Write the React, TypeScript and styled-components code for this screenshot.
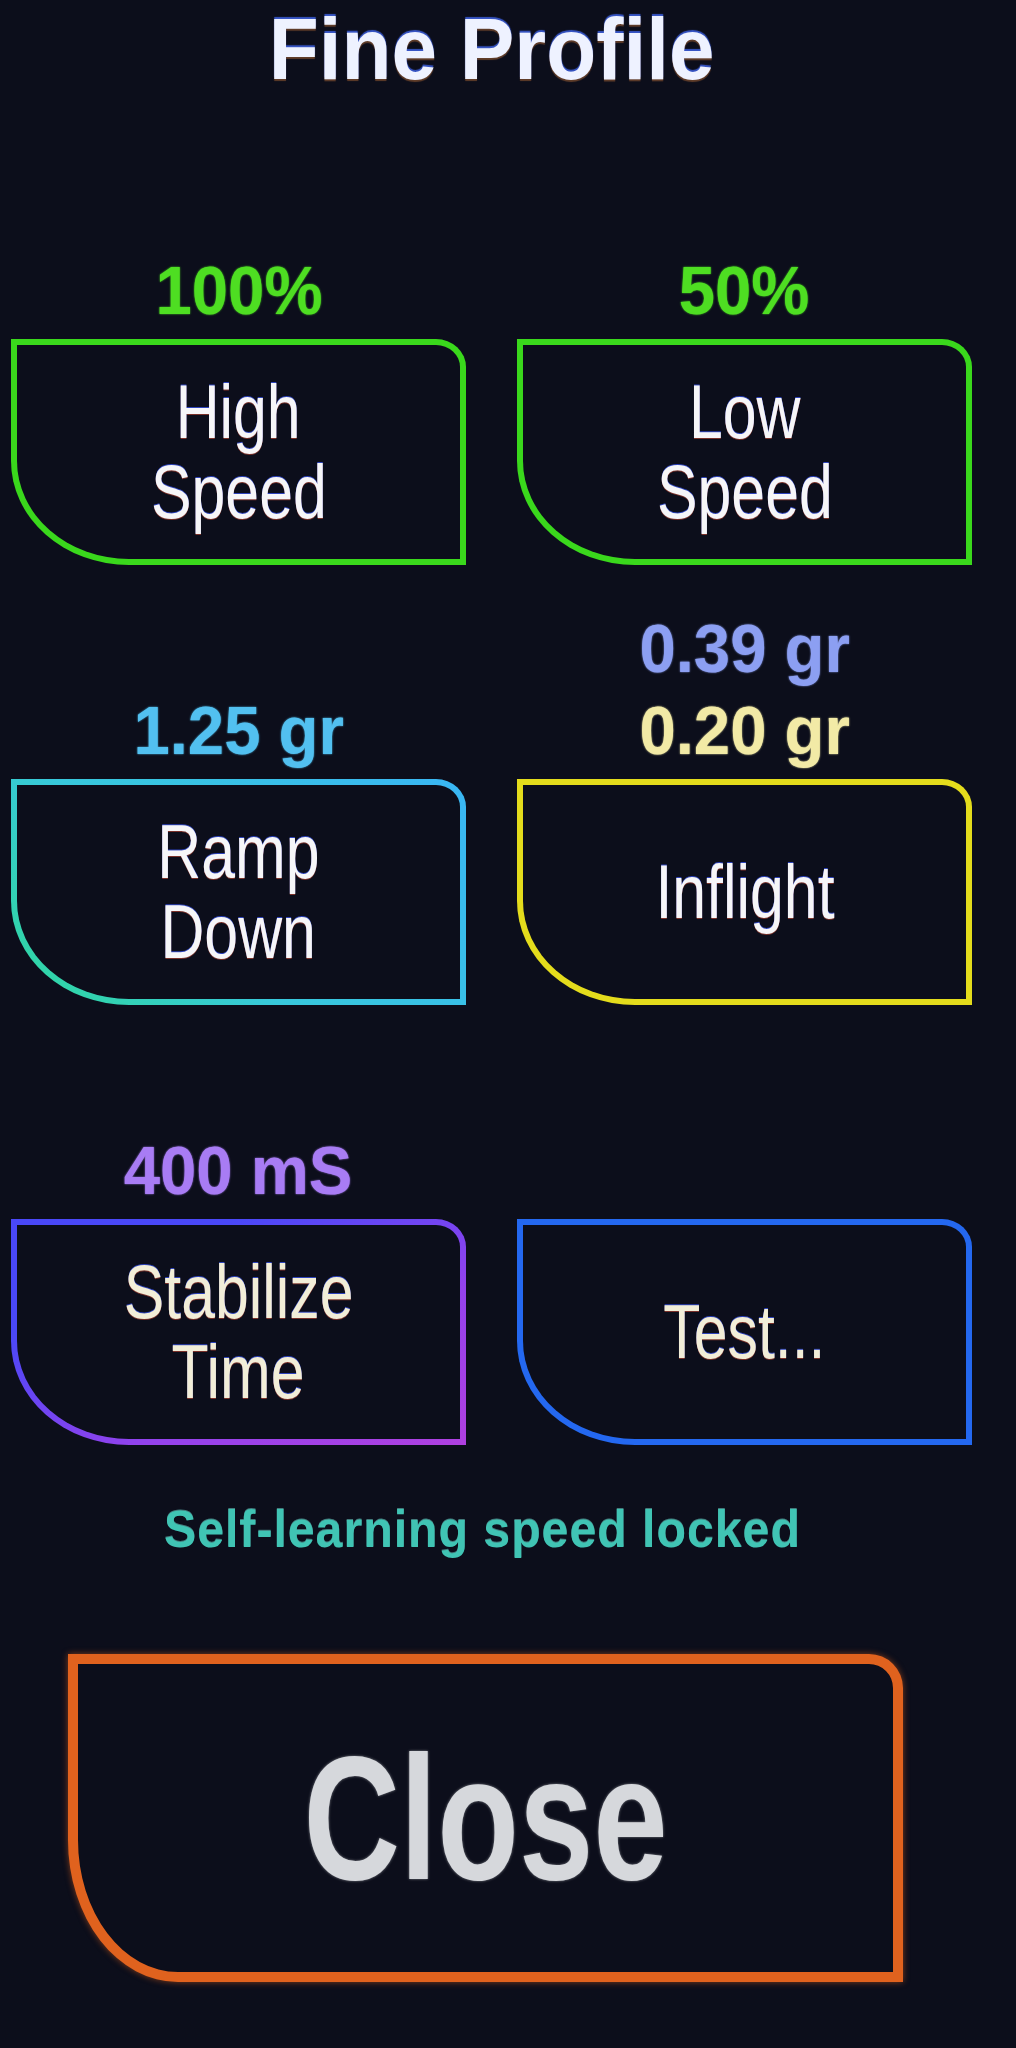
import React from "react";
import styled, { createGlobalStyle } from "styled-components";

const BG = "#0c0e1b";

interface Setting {
  id: string;
  values: { text: string; color: string }[];
  label: string[];
  border: string;
  labelColor?: string;
}

const settings: Setting[] = [
  {
    id: "high",
    values: [{ text: "100%", color: "#4ede22" }],
    label: ["High", "Speed"],
    border: "#3ad81c",
  },
  {
    id: "low",
    values: [{ text: "50%", color: "#4ede22" }],
    label: ["Low", "Speed"],
    border: "#3ad81c",
  },
  {
    id: "ramp",
    values: [{ text: "1.25 gr", color: "#52c0f0" }],
    label: ["Ramp", "Down"],
    border: "linear-gradient(45deg, #2fd89a 0%, #38c8dc 40%, #3ab6f4 100%)",
  },
  {
    id: "inflight",
    values: [
      { text: "0.39 gr", color: "#8c9ff2" },
      { text: "0.20 gr", color: "#f2eaa6" },
    ],
    label: ["Inflight"],
    border: "#e4dc1c",
  },
  {
    id: "stabilize",
    values: [{ text: "400 mS", color: "#a87cf4" }],
    label: ["Stabilize", "Time"],
    border: "linear-gradient(to bottom right, #4a48f8 25%, #9442ec 65%, #b040e0 100%)",
    labelColor: "#f2eed8",
  },
  {
    id: "test",
    values: [],
    label: ["Test..."],
    border: "#2468f0",
    labelColor: "#f2eed8",
  },
];

const App: React.FC = () => {
  return (
    <>
      <GlobalStyle />
      <Screen>
        <Title>
          <Squeeze $sx={0.93}>Fine Profile</Squeeze>
        </Title>

        <Grid>
          {settings.map((s) => (
            <Cell key={s.id}>
              <ValueStack>
                {s.values.map((v) => (
                  <Value key={v.text} $color={v.color}>
                    <Squeeze $sx={0.96}>{v.text}</Squeeze>
                  </Value>
                ))}
              </ValueStack>
              <Key $border={s.border} $color={s.labelColor}>
                {s.label.map((line) => (
                  <KeyLine key={line}>{line}</KeyLine>
                ))}
              </Key>
            </Cell>
          ))}
        </Grid>

        <Status>
          <Squeeze $sx={0.93}>Self-learning speed locked</Squeeze>
        </Status>

        <CloseButton>
          <Squeeze $sx={0.76}>Close</Squeeze>
        </CloseButton>
      </Screen>
    </>
  );
};

export default App;

const GlobalStyle = createGlobalStyle`
  html, body {
    margin: 0;
    padding: 0;
    background: ${BG};
  }
  * {
    box-sizing: border-box;
  }
`;

const Screen = styled.div`
  width: 1016px;
  min-height: 2048px;
  padding-left: 11px;
  background: ${BG};
  font-family: "Liberation Sans", Arial, sans-serif;
  overflow: hidden;
`;

const Squeeze = styled.span<{ $sx: number }>`
  display: inline-block;
  white-space: nowrap;
  transform: scaleX(${(p) => p.$sx});
  transform-origin: center;
`;

const Title = styled.h1`
  margin: 0;
  width: 961px;
  text-align: center;
  font-size: 88px;
  line-height: 98px;
  font-weight: 700;
  color: #eef2ff;
  text-shadow: 0 -2px 1px rgba(70, 110, 255, 0.75), 0 2px 1px rgba(255, 150, 70, 0.35);
`;

const Grid = styled.div`
  display: grid;
  grid-template-columns: 455px 455px;
  column-gap: 51px;
  row-gap: 42px;
  margin-top: 69px;
`;

const Cell = styled.div`
  display: flex;
  flex-direction: column;
`;

const ValueStack = styled.div`
  height: 164px;
  display: flex;
  flex-direction: column;
  justify-content: flex-end;
  align-items: center;
`;

const Value = styled.div<{ $color: string }>`
  font-size: 68px;
  line-height: 82px;
  font-weight: 700;
  color: ${(p) => p.$color};
  text-shadow: 0 0 2px ${(p) => p.$color};
`;

const Key = styled.button<{ $border: string; $color?: string }>`
  height: 226px;
  margin-top: 8px;
  padding: 0;
  border: 6px solid transparent;
  border-radius: 0 30px 0 118px / 0 28px 0 104px;
  background: linear-gradient(${BG}, ${BG}) padding-box, ${(p) => p.$border} border-box;
  display: flex;
  flex-direction: column;
  align-items: center;
  justify-content: center;
  font-family: inherit;
  font-size: 76px;
  line-height: 80px;
  font-weight: 400;
  color: ${(p) => p.$color || "#f6f6f8"};
  text-shadow: 0 -1px 0 rgba(60, 90, 255, 0.7), 0 1px 0 rgba(255, 90, 60, 0.45);
  cursor: pointer;
`;

const KeyLine = styled.span`
  display: block;
  white-space: nowrap;
  transform: scaleX(0.8);
`;

const Status = styled.div`
  width: 961px;
  margin-top: 52px;
  padding-right: 18px;
  text-align: center;
  font-size: 52px;
  line-height: 64px;
  font-weight: 700;
  letter-spacing: 1px;
  color: #40c4b4;
  text-shadow: 0 -1px 0 rgba(120, 230, 220, 0.5);
`;

const CloseButton = styled.button`
  display: flex;
  align-items: center;
  justify-content: center;
  width: 835px;
  height: 328px;
  margin: 93px 0 0 57px;
  padding: 0;
  border: 10px solid #e0621e;
  border-radius: 0 34px 0 110px / 0 34px 0 142px;
  background: ${BG};
  box-shadow: 0 0 6px rgba(230, 100, 30, 0.55);
  font-family: inherit;
  font-size: 176px;
  line-height: 1;
  font-weight: 700;
  color: #d6d8dc;
  text-shadow: 0 0 3px rgba(214, 216, 220, 0.6);
  cursor: pointer;
`;
